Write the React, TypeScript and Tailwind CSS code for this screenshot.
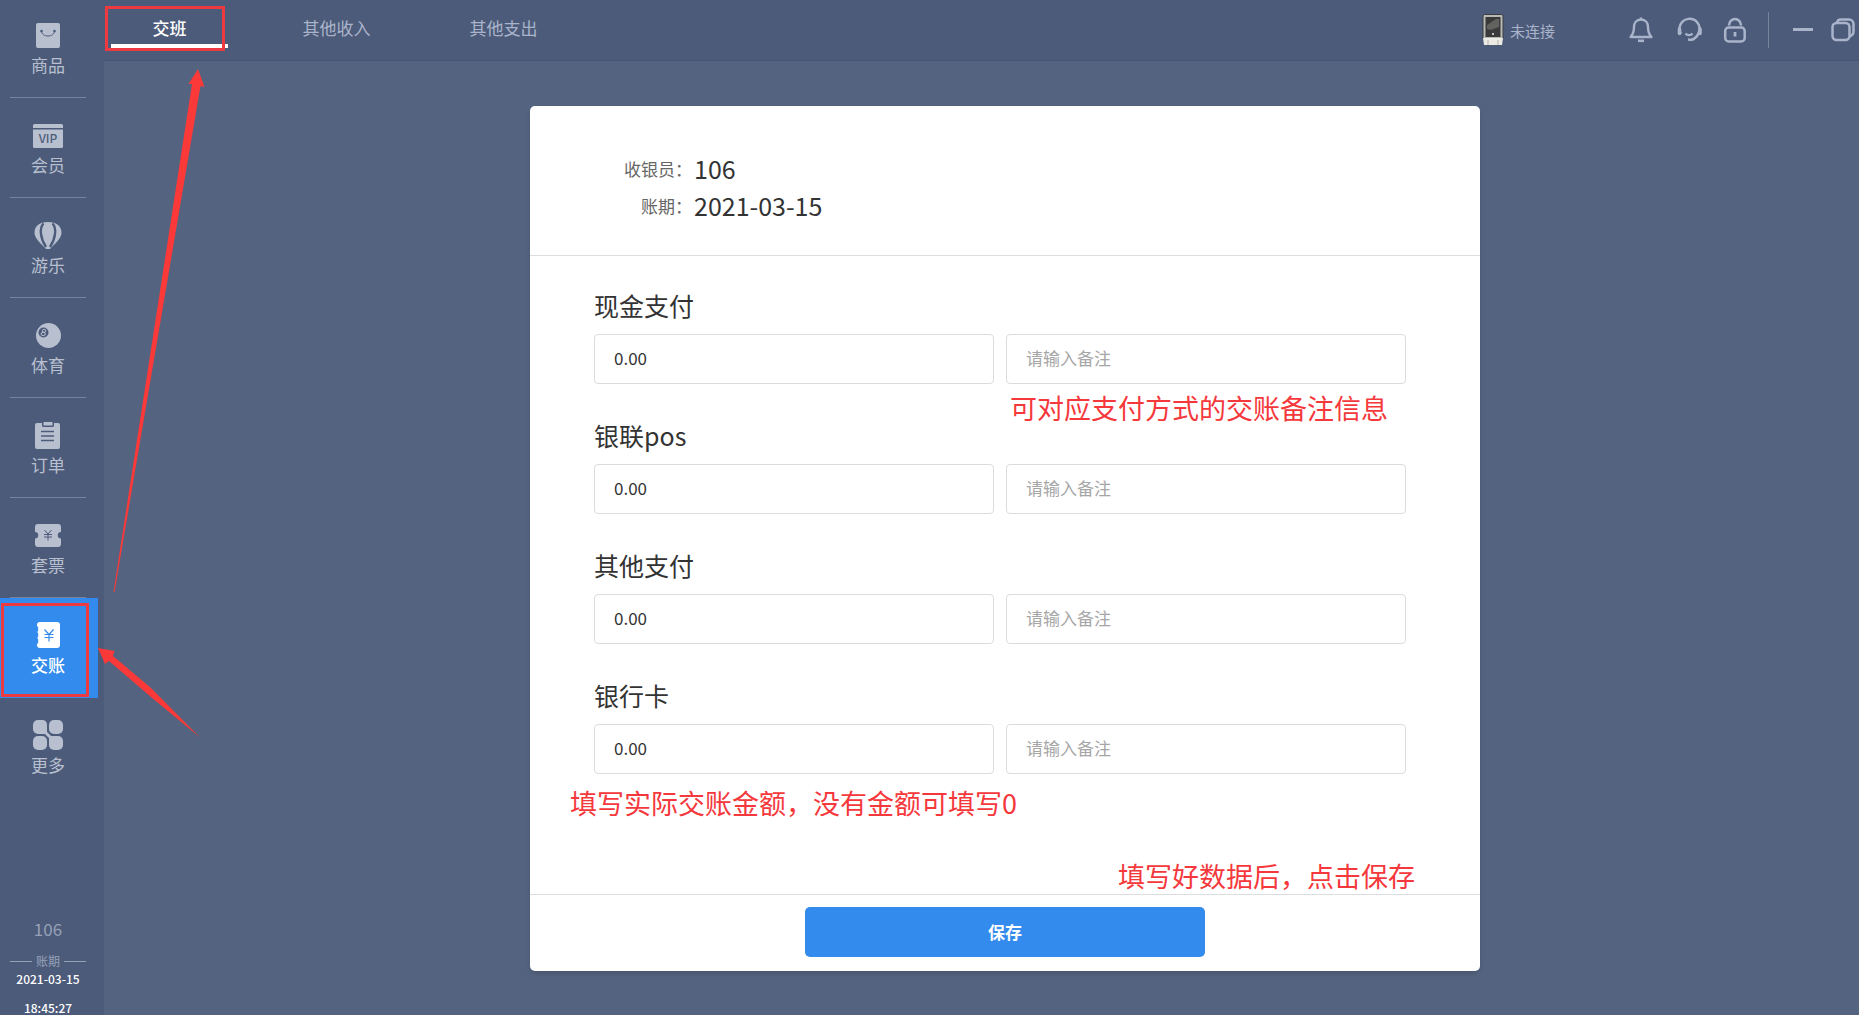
import { useState } from "react"
import type { ReactNode } from "react"

interface NavItem {
  key: string
  label: string
  icon: ReactNode
}

const navItems: NavItem[] = [
  {
    key: 'goods',
    label: '商品',
    icon: (
      <svg width="32" height="32" viewBox="0 0 32 32" fill="none">
        <rect x="4" y="4" width="24" height="25" rx="2" fill="currentColor" />
        <path d="M9.500 12c0 3 3 5 6.500 5s6.500-2 6.500-5" stroke="#4d5b7a" strokeWidth="1" />
        <circle cx="9.500" cy="12" r="1.300" fill="#4d5b7a" />
        <circle cx="22.500" cy="12" r="1.300" fill="#4d5b7a" />
      </svg>
    ),
  },
  {
    key: 'member',
    label: '会员',
    icon: (
      <svg width="32" height="32" viewBox="0 0 32 32" fill="currentColor">
        <path d="M1 9V6.500A1.500 1.500 0 0 1 2.500 5h27A1.500 1.500 0 0 1 31 6.500V9z" />
        <path d="M1 10.500h30v17a1.500 1.500 0 0 1-1.500 1.500h-27A1.500 1.500 0 0 1 1 27.500z" />
        <text x="16" y="23.500" fontSize="12" fontWeight="500" textAnchor="middle" fill="#4d5b7a">VIP</text>
      </svg>
    ),
  },
  {
    key: 'play',
    label: '游乐',
    icon: (
      <svg width="32" height="32" viewBox="0 0 32 32">
        <path d="M16 3C8 3 2.500 7 2.500 13.500c0 6 6 10.500 11.500 16.500h4c5.500-6 11.500-10.500 11.500-16.500C29.500 7 24 3 16 3z" fill="currentColor" />
        <path d="M11.500 4.500C7 9 8.500 20 14 28M20.500 4.500C25 9 23.500 20 18 28" stroke="#4d5b7a" strokeWidth="2.400" fill="none" />
      </svg>
    ),
  },
  {
    key: 'sport',
    label: '体育',
    icon: (
      <svg width="32" height="32" viewBox="0 0 32 32" fill="none">
        <circle cx="16.500" cy="16.500" r="12.500" fill="currentColor" />
        <circle cx="11.500" cy="13.500" r="5" fill="#4d5b7a" />
        <ellipse cx="12.100" cy="11.800" rx="1.700" ry="1.500" stroke="currentColor" strokeWidth="1" />
        <ellipse cx="11.200" cy="15" rx="2.200" ry="1.600" stroke="currentColor" strokeWidth="1" />
      </svg>
    ),
  },
  {
    key: 'order',
    label: '订单',
    icon: (
      <svg width="32" height="32" viewBox="0 0 32 32" fill="none">
        <path d="M5 4h5v2.500A1.500 1.500 0 0 0 11.500 8h9A1.500 1.500 0 0 0 22 6.500V4h4a2 2 0 0 1 2 2v22a2 2 0 0 1-2 2H5a2 2 0 0 1-2-2V6a2 2 0 0 1 2-2z" fill="currentColor" />
        <rect x="11.500" y="3" width="9" height="3.500" fill="currentColor" />
        <path d="M9 12.500h13M9 17h13M9 21.500h13" stroke="#4d5b7a" strokeWidth="1.500" />
      </svg>
    ),
  },
  {
    key: 'ticket',
    label: '套票',
    icon: (
      <svg width="32" height="32" viewBox="0 0 32 32" fill="none">
        <path d="M6 5h20a3 3 0 0 1 3 3v5a3.200 3.200 0 0 0 0 6.400V25a3 3 0 0 1-3 3H6a3 3 0 0 1-3-3v-5.600a3.200 3.200 0 0 0 0-6.400V8a3 3 0 0 1 3-3z" fill="currentColor" />
        <path d="M12.500 11l3.500 4 3.500-4M12 15.500h8M12 18h8M16 15v6.500" stroke="#4d5b7a" strokeWidth="1" />
      </svg>
    ),
  },
  {
    key: 'settle',
    label: '交账',
    icon: (
      <svg width="32" height="32" viewBox="0 0 32 32" fill="none">
        <rect x="5" y="3" width="23" height="26" rx="3" fill="currentColor" />
        <path d="M5 8.500v3M5 14.500v3M5 20.500v3" stroke="#338bed" strokeWidth="2.400" strokeLinecap="round" />
        <path d="M12.500 10.500l4.500 5 4.500-5M12.500 15.500h9M12.500 18.500h9M17 15v7.500" stroke="#338bed" strokeWidth="1.200" />
      </svg>
    ),
  },
  {
    key: 'more',
    label: '更多',
    icon: (
      <svg width="32" height="32" viewBox="0 0 32 32" fill="currentColor">
        <path d="M6 1h4.500a4.500 4.500 0 0 1 4.500 4.500V15H6a5 5 0 0 1-5-5V6a5 5 0 0 1 5-5z" />
        <path d="M22 1h4a5 5 0 0 1 5 5v4a5 5 0 0 1-5 5h-4a5 5 0 0 1-5-5V6a5 5 0 0 1 5-5z" />
        <path d="M6 17h4a5 5 0 0 1 5 5v4a5 5 0 0 1-5 5H6a5 5 0 0 1-5-5v-4a5 5 0 0 1 5-5z" />
        <path d="M17 17h9a5 5 0 0 1 5 5v4a5 5 0 0 1-5 5h-4a5 5 0 0 1-5-5z" />
        <path d="M13 13l6 6" stroke="currentColor" strokeWidth="3" />
      </svg>
    ),
  },
]

const tabs = ['交班', '其他收入', '其他支出']

const payments = [
  { key: 'cash', label: '现金支付' },
  { key: 'pos', label: '银联pos' },
  { key: 'other', label: '其他支付' },
  { key: 'card', label: '银行卡' },
]

function Sidebar() {
  const [active, setActive] = useState('settle')

  return (
    <aside className="w-[104px] h-screen shrink-0 flex flex-col bg-[#4d5b7a] text-[#b8c0d0] overflow-hidden">
      <nav className="w-[98px]">
        {navItems.map((item, index) => (
          <button
            key={item.key}
            type="button"
            onClick={() => setActive(item.key)}
            className={`relative w-full h-[100px] first:h-[98px] pr-0.5 flex flex-col items-center justify-end ${item.key === active ? 'bg-[#338bed] text-white font-medium' : ''}`}
          >
            {item.icon}
            <span className="mt-0.5 mb-5 text-[17px] leading-6">{item.label}</span>
            <span className={`w-[76px] h-px ${index < 6 ? 'bg-[#76829c]' : ''}`}></span>
            {item.key === 'settle' && (
              <span className="absolute left-px top-[5px] w-[88px] h-[94px] border-3 border-[#ec3a40]"></span>
            )}
          </button>
        ))}
      </nav>
      <div className="w-[98px] mt-auto pr-0.5 flex flex-col items-center">
        <div className="text-[17px] leading-6 text-[#96a1b8] mb-3">106</div>
        <div className="w-[76px] flex items-center justify-between text-xs leading-4 text-[#96a1b8] mb-0.5">
          <span className="w-[22px] h-px bg-[#96a1b8]"></span>
          账期
          <span className="w-[22px] h-px bg-[#96a1b8]"></span>
        </div>
        <div className="text-xs leading-4 text-white font-medium mb-3.5">2021-03-15</div>
        <div className="text-xs leading-[14px] text-white font-medium">18:45:27</div>
      </div>
    </aside>
  )
}

function DeviceIcon() {
  return (
    <svg width="22" height="32" viewBox="0 0 22 32">
      <rect x="1" y="0.500" width="20" height="25" rx="1.500" fill="#b9b9b6" stroke="#3b3d40" />
      <rect x="3.500" y="3" width="15" height="20" fill="#3a3a3a" />
      <path d="M5 11l9-6h3v8l-8 3-4-1z" fill="#62625f" />
      <circle cx="11" cy="20" r="1" fill="#e8e8e8" />
      <path d="M1 24h20l-1 7H2z" fill="#eceae4" />
      <path d="M6 26v5M16 26v5" stroke="#b7b4aa" />
    </svg>
  )
}

function TopBar() {
  const [current, setCurrent] = useState('交班')

  return (
    <header className="h-[61px] flex items-start justify-between bg-[#4d5b7a] text-[#a9b4cb] border-b border-[#495776] overflow-hidden">
      <div className="relative flex gap-[50px] pl-[7px]">
        {tabs.map((tab) => (
          <button
            key={tab}
            type="button"
            onClick={() => setCurrent(tab)}
            className={`w-[117px] h-12 pt-3 text-[17px] leading-8 border-b-4 ${tab === current ? 'border-white text-white font-medium' : 'border-transparent'}`}
          >
            {tab}
          </button>
        ))}
        <span className="absolute left-px top-1.5 w-[120px] h-[45px] border-3 border-[#ec3a40] pointer-events-none"></span>
      </div>

      <div className="h-[60px] flex items-center pr-1">
        <DeviceIcon />
        <span className="ml-1.5 text-[15px] leading-6 pt-0.5">未连接</span>
        <div className="flex items-center gap-5 ml-[72px]">
          <button type="button" aria-label="消息">
            <svg width="28" height="28" viewBox="0 0 28 28" fill="none" stroke="currentColor" strokeWidth="2.400">
              <path d="M14 3.500C9.500 3.500 7 7 7 11c0 5-.5 7-3.500 10h21C21.500 18 21 16 21 11c0-4-2.500-7.500-7-7.500z" strokeLinejoin="round" />
              <path d="M14 1.500v2" />
              <path d="M11 24.800h6" strokeWidth="2.600" />
            </svg>
          </button>
          <button type="button" aria-label="客服">
            <svg width="28" height="28" viewBox="0 0 28 28" fill="none" stroke="currentColor" strokeWidth="2.400">
              <path d="M6 18a10 10 0 1 1 18-2c-1.500 4.500-4 7-8 8" />
              <path d="M4.500 13v4.500M25 13v4.500" strokeWidth="3.600" strokeLinecap="round" />
              <path d="M10.500 17.500c1.800 2.200 5.200 2.200 7 0M16 24l-3-.5" />
            </svg>
          </button>
          <button type="button" aria-label="锁屏">
            <svg width="24" height="28" viewBox="0 0 24 28" fill="none" stroke="currentColor" strokeWidth="2.500">
              <rect x="2.200" y="11.500" width="19.500" height="14" rx="3.500" />
              <path d="M6 9.500a6 6.500 0 0 1 12 0" />
              <path d="M12 16v4.500" strokeWidth="2.800" />
            </svg>
          </button>
        </div>
        <span className="w-px h-9 bg-[#76829c] ml-[21px]"></span>
        <button type="button" aria-label="最小化" className="ml-6">
          <svg width="20" height="20" viewBox="0 0 20 20" fill="none">
            <path d="M0 9.500h20" stroke="currentColor" strokeWidth="3" />
          </svg>
        </button>
        <button type="button" aria-label="还原" className="ml-[18px]">
          <svg width="24" height="24" viewBox="0 0 24 24" fill="none" stroke="currentColor" strokeWidth="2.500">
            <rect x="1.500" y="5" width="17" height="17" rx="4" />
            <path d="M6 4.500C6.500 2.500 7.500 1.500 9.500 1.500H18a4.500 4.500 0 0 1 4.500 4.500v7.500c0 2.500-1.500 4-4 5" />
          </svg>
        </button>
      </div>
    </header>
  )
}

function ShiftForm() {
  return (
    <form className="relative w-[950px] bg-white rounded-[5px] shadow-md text-[#333]" onSubmit={(e) => e.preventDefault()}>
      <dl className="pt-11 pb-[31px] border-b border-[#dcdddf] text-[25px] leading-[37px]">
        <div className="flex">
          <dt className="w-[162px] text-right text-[17px] text-[#666]">收银员：</dt>
          <dd className="ml-0.5">106</dd>
        </div>
        <div className="flex">
          <dt className="w-[162px] text-right text-[17px] text-[#666]">账期：</dt>
          <dd className="ml-0.5">2021-03-15</dd>
        </div>
      </dl>

      <div className="pt-7 px-16 pb-[120px] flex flex-col gap-[30px]">
        {payments.map((pay) => (
          <div key={pay.key}>
            <label htmlFor={pay.key} className="block mb-2 text-[25px] leading-[42px]">{pay.label}</label>
            <div className="flex gap-3">
              <input
                id={pay.key}
                defaultValue="0.00"
                className="w-[400px] h-[50px] px-[19px] pb-[3px] text-[17px] border border-[#dcdcdc] rounded-[4px] outline-none"
              />
              <input
                aria-label={`${pay.label}备注`}
                placeholder="请输入备注"
                className="w-[400px] h-[50px] px-[19px] pb-[3px] text-[17px] border border-[#dcdcdc] rounded-[4px] outline-none placeholder:text-[#a6a6a6]"
              />
            </div>
          </div>
        ))}
      </div>

      <div className="pt-3 pb-3.5 flex justify-center border-t border-[#dcdddf]">
        <button type="submit" className="w-[400px] h-[50px] bg-[#338bed] rounded-[5px] text-white text-[17px] font-bold">
          保存
        </button>
      </div>

      {/* 操作提示 */}
      <div className="absolute left-[480px] top-[282px] text-[27px] leading-10 text-[#f5383c] whitespace-nowrap">可对应支付方式的交账备注信息</div>
      <div className="absolute left-10 top-[677px] text-[27px] leading-10 text-[#f5383c] whitespace-nowrap">填写实际交账金额，没有金额可填写0</div>
      <div className="absolute left-[588px] top-[750px] text-[27px] leading-10 text-[#f5383c] whitespace-nowrap">填写好数据后，点击保存</div>
    </form>
  )
}

export default function App() {
  return (
    <div className="relative flex h-screen overflow-hidden bg-[#54637f] font-['Noto_Sans_CJK_SC','Noto_Sans',sans-serif]">
      <Sidebar />
      <div className="flex-1 min-w-0 flex flex-col">
        <TopBar />
        <main className="flex-1 pt-[45px] pl-[47px] flex justify-center items-start">
          <ShiftForm />
        </main>
      </div>

      {/* 指引箭头 */}
      <svg className="absolute left-0 top-0 pointer-events-none" width="240" height="760" viewBox="0 0 240 760" fill="#fc3939">
        <path d="M198 69L204.500 87L200.500 86L114.500 592H113.500L192 84L188.500 84Z" />
        <path d="M98 648L114.500 651L113 656L151 688L200 737.500L151 697L109 661L105 664Z" />
      </svg>
    </div>
  )
}
